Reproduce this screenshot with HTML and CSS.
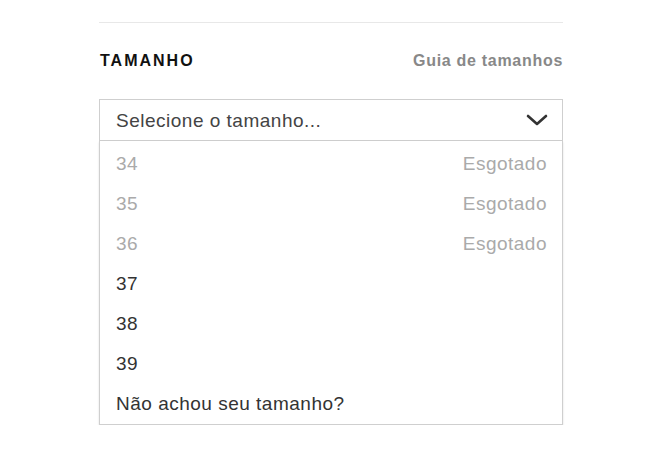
FILE: index.html
```html
<!DOCTYPE html>
<html lang="pt-BR">
<head>
  <meta charset="UTF-8">
  <meta name="viewport" content="width=device-width, initial-scale=1.0">
  <title>Tamanho</title>
  <link rel="stylesheet" href="styles.css">
</head>
<body>
  <div class="size-box">
    <div class="size-head">
      <h2>TAMANHO</h2>
      <a href="#" class="guide">Guia de tamanhos</a>
    </div>
    <div class="select">
      <span>Selecione o tamanho...</span>
      <svg class="chevron" width="22" height="12" viewBox="0 0 22 12">
        <polyline points="2,2 11,10 20,2" fill="none" stroke="#333" stroke-width="2.6" stroke-linecap="round" stroke-linejoin="round"/>
      </svg>
    </div>
    <ul class="options">
      <li class="off"><span>34</span><span>Esgotado</span></li>
      <li class="off"><span>35</span><span>Esgotado</span></li>
      <li class="off"><span>36</span><span>Esgotado</span></li>
      <li><span>37</span></li>
      <li><span>38</span></li>
      <li><span>39</span></li>
      <li><span>Não achou seu tamanho?</span></li>
    </ul>
  </div>
</body>
</html>
```

FILE: styles.css
```css
body { font-family: "Liberation Sans", Arial, sans-serif; margin: 0; padding-top: 22px; background: #fff; color: #333; }
.size-box { width: 464px; margin-left: 99px; border-top: 1px solid #e8e8e8; }
.size-head { display: flex; justify-content: space-between; align-items: baseline; height: 20px; line-height: 20px; margin: 28px 0 28px; padding-left: 1px; }
.size-head h2 { margin: 0; font-size: 16px; font-weight: bold; letter-spacing: 2px; color: #111; }
.guide { font-size: 16px; font-weight: bold; letter-spacing: 0.7px; color: #888; text-decoration: none; }
.select { display: flex; justify-content: space-between; align-items: center; height: 40px; border: 1px solid #cfcfcf; padding: 2px 14px 0 16px; box-sizing: content-box; font-size: 19px; letter-spacing: 0.5px; color: #444; }
.select { height: 38px; }
.chevron { display: block; margin-top: -2px; }
.options { list-style: none; margin: 0; padding: 3px 0 0; border: 1px solid #cfcfcf; border-top: none; box-shadow: 0 1px 2px rgba(0,0,0,0.12); }
.options li { display: flex; justify-content: space-between; align-items: center; height: 40px; padding: 0 15px 0 16px; font-size: 19px; letter-spacing: 0.5px; color: #333; }
.options li.off { color: #aaa; }
```
